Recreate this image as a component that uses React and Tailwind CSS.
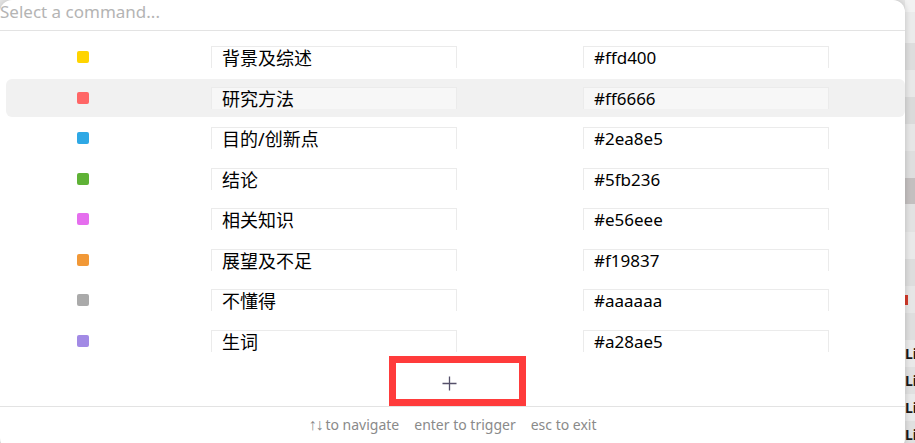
import { useState } from "react";

const tags = [
  { name: "背景及综述", color: "#ffd400" },
  { name: "研究方法", color: "#ff6666" },
  { name: "目的/创新点", color: "#2ea8e5" },
  { name: "结论", color: "#5fb236" },
  { name: "相关知识", color: "#e56eee" },
  { name: "展望及不足", color: "#f19837" },
  { name: "不懂得", color: "#aaaaaa" },
  { name: "生词", color: "#a28ae5" },
];

// background page peeking out on the right
const bands = [
  { h: 12, bg: "#f2f2f2" },
  { h: 31, bg: "#ebebeb" },
  { h: 27, bg: "#dddddd" },
  { h: 27, bg: "#e8e8e8" },
  { h: 27, bg: "#dadada" },
  { h: 27, bg: "#e6e6e6" },
  { h: 27, bg: "#dedede" },
  { h: 26, bg: "#c3bfbf" },
  { h: 28, bg: "#e2e2e2" },
  { h: 27, bg: "#e9e9e9" },
  { h: 27, bg: "#dddddd" },
  { h: 27, bg: "#e6e6e6", mark: true },
  { h: 27, bg: "#dedede" },
  { h: 27, bg: "#e9e9e9", text: "Li" },
  { h: 27, bg: "#e0e0e0", text: "Li" },
  { h: 27, bg: "#e9e9e9", text: "Li" },
  { h: 27, bg: "#e0e0e0", text: "Li" },
];

function TagRow({ tag, active }) {
  const box = `h-[22px] w-[246px] overflow-hidden border-x border-t border-[#ebebeb] pl-[10px] leading-[22px] text-black ${active ? "bg-[#f7f7f7]" : "bg-white"}`;
  return (
    <div className={`flex items-center h-[38px] rounded-md ${active ? "bg-[#f1f1f1]" : ""}`}>
      <div className="ml-[71px] w-[12px] h-[12px] rounded-[2px]" style={{ backgroundColor: tag.color }} />
      <div className={`ml-[122px] text-[18px] ${box}`}>{tag.name}</div>
      <div className={`ml-[126px] text-[17px] ${box}`}>{tag.color}</div>
    </div>
  );
}

export default function App() {
  const [active] = useState(1);

  return (
    <div
      className="flex w-[915px] h-[443px] overflow-hidden bg-[#e6e6e6]"
      style={{ fontFamily: '"Noto Sans", "Noto Sans CJK SC", sans-serif' }}
    >
      <div className="relative w-[905px] h-[450px] shrink-0 bg-white rounded-xl shadow-[0_0_6px_rgba(0,0,0,0.18)] z-10 flex flex-col">
        <div className="h-[31px] border-b border-[#e3e3e3] flex items-start">
          <div className="text-[17px] leading-[24px] text-[#b4b4b4]">Select a command...</div>
        </div>

        <div className="pt-[7px] pl-[6px] flex flex-col gap-[2.5px]">
          {tags.map((t, i) => (
            <TagRow key={t.name} tag={t} active={i === active} />
          ))}
        </div>

        <div className="h-[46px] flex items-center justify-center">
          <svg width="15" height="15" viewBox="0 0 15 15" className="-translate-x-[3px] translate-y-[1px]">
            <path d="M7.5 0.5v14M0.5 7.5h14" stroke="#55506a" strokeWidth="1.3" fill="none" />
          </svg>
        </div>

        <div className="h-[37px] border-t border-[#e3e3e3] flex items-center justify-center gap-[15px] text-[14px] text-[#8a8a8a]">
          <span>
            <span style={{ fontFamily: '"Liberation Sans", sans-serif' }} className="text-[16px] tracking-[-1px] mr-[3px]">↑↓</span>
            to navigate
          </span>
          <span>enter to trigger</span>
          <span>esc to exit</span>
        </div>

        {/* annotation box */}
        <div className="absolute left-[389px] top-[356px] w-[137px] h-[50px] border-[7px] border-[#ff3b3b]" />
      </div>

      <div className="flex flex-col w-[10px] shrink-0">
        {bands.map((b, i) => (
          <div
            key={i}
            className="shrink-0 flex items-center overflow-hidden text-[14px] font-bold text-[#1a1a1a]"
            style={{ height: b.h, backgroundColor: b.bg }}
          >
            {b.mark && <div className="w-[3px] h-[10px] bg-[#d23a2a]" />}
            {b.text}
          </div>
        ))}
      </div>
    </div>
  );
}
